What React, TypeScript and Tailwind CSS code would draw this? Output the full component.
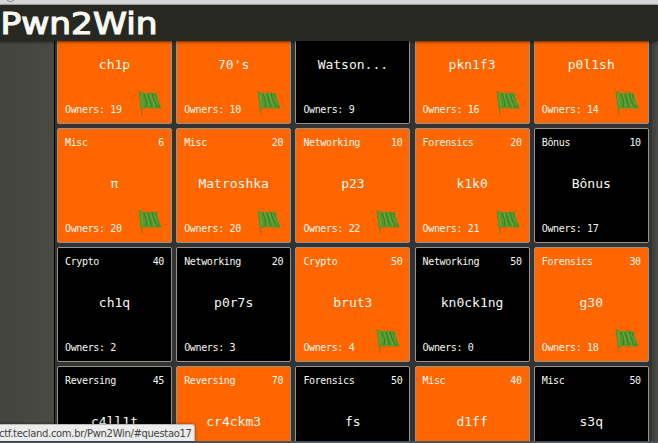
import React from "react";

type Card = { cat: string; pts: number; name: string; owners: number; solved: boolean };

const c = (cat: string, pts: number, name: string, owners: number, solved: boolean): Card => ({ cat, pts, name, owners, solved });

const cards: Card[] = [
  c("Crypto", 20, "ch1p", 19, true),
  c("Misc", 10, "70's", 10, true),
  c("Misc", 30, "Watson...", 9, false),
  c("Networking", 20, "pkn1f3", 16, true),
  c("Misc", 20, "p0l1sh", 14, true),
  c("Misc", 6, "π", 20, true),
  c("Misc", 20, "Matroshka", 20, true),
  c("Networking", 10, "p23", 22, true),
  c("Forensics", 20, "k1k0", 21, true),
  c("Bônus", 10, "Bônus", 17, false),
  c("Crypto", 40, "ch1q", 2, false),
  c("Networking", 20, "p0r7s", 3, false),
  c("Crypto", 50, "brut3", 4, true),
  c("Networking", 50, "kn0ck1ng", 0, false),
  c("Forensics", 30, "g30", 18, true),
  c("Reversing", 45, "c4ll1t", 5, false),
  c("Reversing", 70, "cr4ckm3", 3, true),
  c("Forensics", 50, "fs", 2, false),
  c("Misc", 40, "d1ff", 8, true),
  c("Misc", 50, "s3q", 1, false),
];

function Flag() {
  return (
    <svg className="absolute right-[8px] bottom-[7px] h-[26px] w-[25px]" viewBox="0 0 25 26">
      <path d="M1 1 L4.2 25" stroke="#9a6a1c" strokeWidth="1.1" fill="none" />
      <path d="M1 1 Q6 4 11 3 Q16 2.5 19 3.5 Q20 11 24 19 Q18 18 15 18.5 Q8 17 3.2 19.5 Z" fill="#54992d" />
      <g stroke="#2f6b20" strokeWidth=".8" fill="none" opacity=".85">
        <path d="M6 4 L9 12 L8 17M10 4 L12 11 L14 17M14 3 L16 11 L20 18M17 4 L18 12 L22 17" />
      </g>
      <g stroke="#7bb843" strokeWidth=".7" fill="none" opacity=".8">
        <path d="M3 4 L5 17M8 4 L11 16M12 4 L17 17M16 5 L20 16" />
      </g>
    </svg>
  );
}

export default function App() {
  return (
    <div className="flex h-[443px] w-[658px] flex-col overflow-hidden bg-[#46463f] font-['DejaVu_Sans_Mono',monospace] text-[#f8f8f2]">
      <div className="relative h-[5px] shrink-0 overflow-hidden border-b border-[#aaa] bg-[#d6d6d6]">
        <div className="absolute -top-[9px] left-[5px] h-[11px] w-[11px] rounded-full border border-[#7b8794]" />
      </div>
      <header className="relative z-10 h-[36px] shrink-0 bg-[#272822] shadow-[0_1px_3px_rgba(0,0,0,0.6)]">
        <svg className="block h-[36px] w-[170px]" viewBox="0 0 170 36" fill="#f8f8f2">
          <text x="0.5" y="29" textLength="157" lengthAdjust="spacingAndGlyphs" stroke="#f8f8f2" strokeWidth="1.2" strokeLinejoin="miter" fontFamily="'DejaVu Sans', sans-serif" fontSize="31">
            Pwn2Win
          </text>
        </svg>
      </header>
      <div className="flex h-[400px] shrink-0 overflow-hidden">
        <div className="w-[54px] shrink-0 bg-linear-to-r from-[#444440] to-[#4a4a43]" />
        <main className="-mt-[32px] w-[598px] shrink-0 border-l border-black bg-[#333] pl-[2px]">
          <div className="grid grid-cols-[repeat(5,115px)] gap-x-[4.2px] gap-y-[4.1px]">
            {cards.map((card) => (
              <article
                key={card.name}
                className={`relative flex h-[115px] flex-col justify-between rounded-[2px] border border-[#96938c] px-[7px] pt-[8px] pb-[8px] text-[10px] leading-[11px] tracking-[-0.36px] ${card.solved ? "bg-[#ff6600]" : "bg-black"}`}
              >
                <div className="flex justify-between">
                  <span>{card.cat}</span>
                  <span>{card.pts}</span>
                </div>
                <h2 className="-mt-[3px] text-center text-[13px] leading-[16px] tracking-normal">{card.name}</h2>
                <div>Owners: {card.owners}</div>
                {card.solved && <Flag />}
              </article>
            ))}
          </div>
        </main>
        <div className="flex-1 bg-linear-to-r from-[#3e3e3b] to-[#4a4a43]" />
      </div>
      <div className="h-[2px] shrink-0 bg-[#4d535b]" />
      <div className="absolute top-[424px] left-0 z-10 flex h-[17px] w-[195px] items-center rounded-tr-[3px] border-t border-r border-[#bbb] bg-[#ececec] pt-px font-['DejaVu_Sans',sans-serif] text-[10px] tracking-[-0.32px] whitespace-nowrap text-[#444] shadow-[0_0_3px_rgba(0,0,0,0.5)]">
        <span className="-ml-px">ctf.tecland.com.br/Pwn2Win/#questao17</span>
      </div>
    </div>
  );
}
